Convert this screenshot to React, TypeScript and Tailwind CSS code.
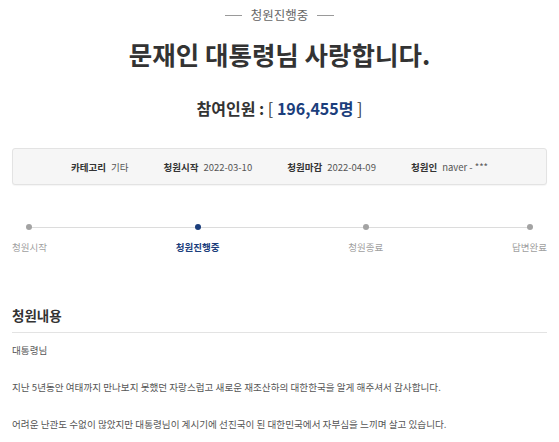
import React from 'react';

const steps = [
  { label: '청원시작', active: false },
  { label: '청원진행중', active: true },
  { label: '청원종료', active: false },
  { label: '답변완료', active: false },
];

const info = [
  { k: '카테고리', v: '기타' },
  { k: '청원시작', v: '2022-03-10' },
  { k: '청원마감', v: '2022-04-09' },
  { k: '청원인', v: 'naver - ***' },
];

const App: React.FC = () => {
  return (
    <div className="w-[559px] h-[442px] overflow-hidden bg-white px-[12px] pt-[5px] font-['Noto_Sans_CJK_KR',sans-serif] text-[#333]">
      {/* Status */}
      <div className="flex h-[20px] items-center justify-center gap-[9px]">
        <span className="h-px w-[17px] bg-[#9a9a9a]" />
        <span className="text-[12.5px] leading-[20px] text-[#666]">청원진행중</span>
        <span className="h-px w-[17px] bg-[#9a9a9a]" />
      </div>

      {/* Title */}
      <h1 className="mt-[11px] text-center text-[25.5px] font-bold leading-[36px] text-[#333]">
        문재인 대통령님 사랑합니다.
      </h1>

      {/* Count */}
      <div className="mt-[24px] text-center text-[16px] font-bold leading-[24px] text-[#333]">
        참여인원 : <span className="font-normal">[</span>{' '}
        <span className="text-[#1b3e7c]">196,455명</span>{' '}
        <span className="font-normal">]</span>
      </div>

      {/* Info box */}
      <div className="mt-[28px] flex h-[37px] items-center justify-center gap-[35px] rounded-[3px] border border-[#e3e3e3] bg-[#f6f6f6] shadow-[0_1px_1px_rgba(0,0,0,0.04)]">
        {info.map((it, i) => (
          <div key={i} className="flex items-center gap-[5px] text-[9.5px] leading-[14px]">
            <span className="font-bold text-[#333]">{it.k}</span>
            <span className="text-[#555]">{it.v}</span>
          </div>
        ))}
      </div>

      {/* Timeline */}
      <div className="relative mt-[39px] flex justify-between">
        <div className="absolute left-[19px] right-[18px] top-[2.5px] h-px bg-[#dcdcdc]" />
        {steps.map((s, i) => (
          <div key={i} className="relative flex flex-col items-center">
            <span
              className={
                s.active
                  ? 'h-[6px] w-[6px] rounded-full bg-[#1b3e7c]'
                  : 'h-[6px] w-[6px] rounded-full bg-[#a3a3a3]'
              }
            />
            <span
              className={
                s.active
                  ? 'mt-[10px] text-[9.5px] font-bold leading-[14px] text-[#1b3e7c]'
                  : 'mt-[10px] text-[9.5px] leading-[14px] text-[#a0a0a0]'
              }
            >
              {s.label}
            </span>
          </div>
        ))}
      </div>

      {/* Content */}
      <h2 className="mt-[51px] border-b border-[#e3e3e3] pb-[7px] text-[13.5px] font-bold leading-[20px] text-[#333]">
        청원내용
      </h2>
      <div className="mt-[9px] flex flex-col gap-[21px] text-[9.6px] leading-[16px] text-[#555]">
        <p>대통령님</p>
        <p>지난 5년동안 여태까지 만나보지 못했던 자랑스럽고 새로운 재조산하의 대한한국을 알게 해주셔서 감사합니다.</p>
        <p>어려운 난관도 수없이 많았지만 대통령님이 계시기에 선진국이 된 대한민국에서 자부심을 느끼며 살고 있습니다.</p>
      </div>
    </div>
  );
};

export default App;
